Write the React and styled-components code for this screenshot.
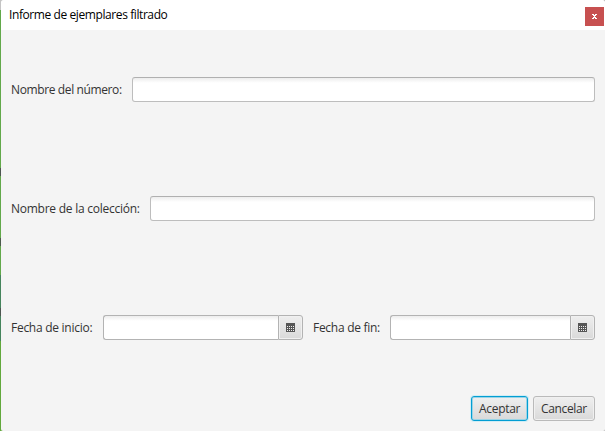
import React from 'react';
import styled, { createGlobalStyle } from 'styled-components';

const GlobalStyle = createGlobalStyle`
  * { box-sizing: border-box; }
  body { margin: 0; overflow: hidden; }
`;

const Desktop = styled.div`
  width: 605px;
  height: 431px;
  padding-left: 1px;
  background:
    linear-gradient(#b8b8b8, #b8b8b8) right top / 600px 431px no-repeat,
    linear-gradient(
      #c4c4c4 0 10px, #62a84a 10px 168px, #4d5550 168px 176px,
      #62a84a 176px 238px, #4d5a4d 238px 246px, #62a84a 246px 275px,
      #45845c 275px 308px, #4d5550 308px 316px, #45845c 316px 341px,
      #62a83c 341px
    );
  font-family: 'Open Sans', 'Noto Sans', sans-serif;
  font-size: 12px;
  color: #333;
`;

const Dialog = styled.div`
  height: 431px;
  display: flex;
  flex-direction: column;
  background: #f4f4f4;
  border-radius: 3px 3px 2px 2px;
  overflow: hidden;
`;

const TitleBar = styled.header`
  height: 30px;
  flex: none;
  display: flex;
  justify-content: space-between;
  align-items: flex-start;
  padding: 7px 1px 0 8px;
  background: #fff;
`;

const Title = styled.h1`
  margin: 0;
  font-size: 12px;
  font-weight: 400;
  line-height: 16px;
  letter-spacing: ${(p) => p.$spacing}px;
  color: #000;
  white-space: nowrap;
`;

const CloseButton = styled.button`
  width: 19px;
  height: 19px;
  padding: 0;
  border: 0;
  display: grid;
  place-items: center;
  background: #c75050;
`;

const Form = styled.form`
  flex: 1;
  display: flex;
  flex-direction: column;
  padding: 47px 10px 10px 10px;
`;

const Row = styled.div`
  height: 25px;
  display: flex;
  align-items: center;
  margin-bottom: ${(p) => p.$after}px;
`;

const Label = styled.label`
  width: ${(p) => p.$width}px;
  flex: none;
  margin-right: 10px;
  line-height: 25px;
  letter-spacing: ${(p) => p.$spacing}px;
  white-space: nowrap;
`;

const TextInput = styled.input`
  flex: 1;
  min-width: 0;
  height: 25px;
  padding: 0 7px;
  border: 1px solid #bdbdbd;
  border-top-color: #b0b0b0;
  border-radius: 3px;
  outline: 0;
  background: linear-gradient(#ededed, #fff 5px);
  font: inherit;
`;

const DatePicker = styled.div`
  width: ${(p) => p.$width}px;
  height: 25px;
  flex: none;
  display: flex;
  margin-right: ${(p) => p.$after || 0}px;
`;

const DateInput = styled(TextInput)`
  border-color: #b3b3b3;
  border-right: 0;
  border-radius: 3px 0 0 3px;
`;

const CalendarButton = styled.button`
  width: 25px;
  height: 25px;
  padding: 0;
  border: 1px solid #b3b3b3;
  border-radius: 0 3px 3px 0;
  display: grid;
  place-items: center;
  background: linear-gradient(#eee, #d9d9d9);
  box-shadow: inset 0 0 0 1px #f0f0f0;
`;

const Actions = styled.div`
  display: flex;
  justify-content: flex-end;
  gap: 5px;
`;

const Button = styled.button`
  width: ${(p) => p.$width}px;
  height: 25px;
  padding: 0 0 0 7px;
  text-align: left;
  border: 1px solid ${(p) => (p.$primary ? '#039ed3' : '#bababa')};
  border-radius: 3px;
  background: linear-gradient(#efefef, #d9d9d9);
  box-shadow: ${(p) => (p.$primary
    ? 'inset 0 0 0 1px #9bd4e6, 0 0 0 1px #d1edf5'
    : 'inset 0 0 0 1px #f0f0f0')};
  color: #333;
  font: inherit;
  line-height: 22px;
  letter-spacing: ${(p) => p.$spacing}px;
  white-space: nowrap;
`;

const CalendarIcon = () => (
  <svg width="9" height="9" viewBox="0 0 9 9" shapeRendering="crispEdges">
    <path d="M0 0h9v9H0z" fill="#555" />
    <path
      d="M1 3h1v1H1zM3 3h1v1H3zM5 3h1v1H5zM7 3h1v1H7zM1 5h1v1H1zM3 5h1v1H3zM5 5h1v1H5zM7 5h1v1H7zM1 7h1v1H1zM3 7h1v1H3zM5 7h1v1H5zM7 7h1v1H7z"
      fill="#ededed"
    />
  </svg>
);

const CloseIcon = () => (
  <svg width="5" height="5" viewBox="0 0 5 5" shapeRendering="crispEdges">
    <path d="M0 0h2v1H0zM3 0h2v1H3zM1 1h3v1H1zM2 2h1v1H2zM1 3h3v1H1zM0 4h2v1H0zM3 4h2v1H3z" fill="#fff" />
  </svg>
);

export default function App() {
  return (
    <>
      <GlobalStyle />
      <Desktop>
        <Dialog>
          <TitleBar>
            <Title $spacing={-0.41}>Informe de ejemplares filtrado</Title>
            <CloseButton aria-label="Cerrar"><CloseIcon /></CloseButton>
          </TitleBar>
          <Form onSubmit={(e) => e.preventDefault()}>
            <Row $after={94}>
              <Label htmlFor="numero" $width={111} $spacing={-0.38}>Nombre del número:</Label>
              <TextInput id="numero" />
            </Row>
            <Row $after={94}>
              <Label htmlFor="coleccion" $width={129} $spacing={-0.25}>Nombre de la colección:</Label>
              <TextInput id="coleccion" />
            </Row>
            <Row $after={56}>
              <Label htmlFor="inicio" $width={82} $spacing={-0.27}>Fecha de inicio:</Label>
              <DatePicker $width={200} $after={10}>
                <DateInput id="inicio" />
                <CalendarButton type="button"><CalendarIcon /></CalendarButton>
              </DatePicker>
              <Label htmlFor="fin" $width={67} $spacing={-0.28}>Fecha de fin:</Label>
              <DatePicker $width={205}>
                <DateInput id="fin" />
                <CalendarButton type="button"><CalendarIcon /></CalendarButton>
              </DatePicker>
            </Row>
            <Actions>
              <Button $width={57} $spacing={-0.3} $primary>Aceptar</Button>
              <Button $width={62} $spacing={-0.35} type="button">Cancelar</Button>
            </Actions>
          </Form>
        </Dialog>
      </Desktop>
    </>
  );
}
